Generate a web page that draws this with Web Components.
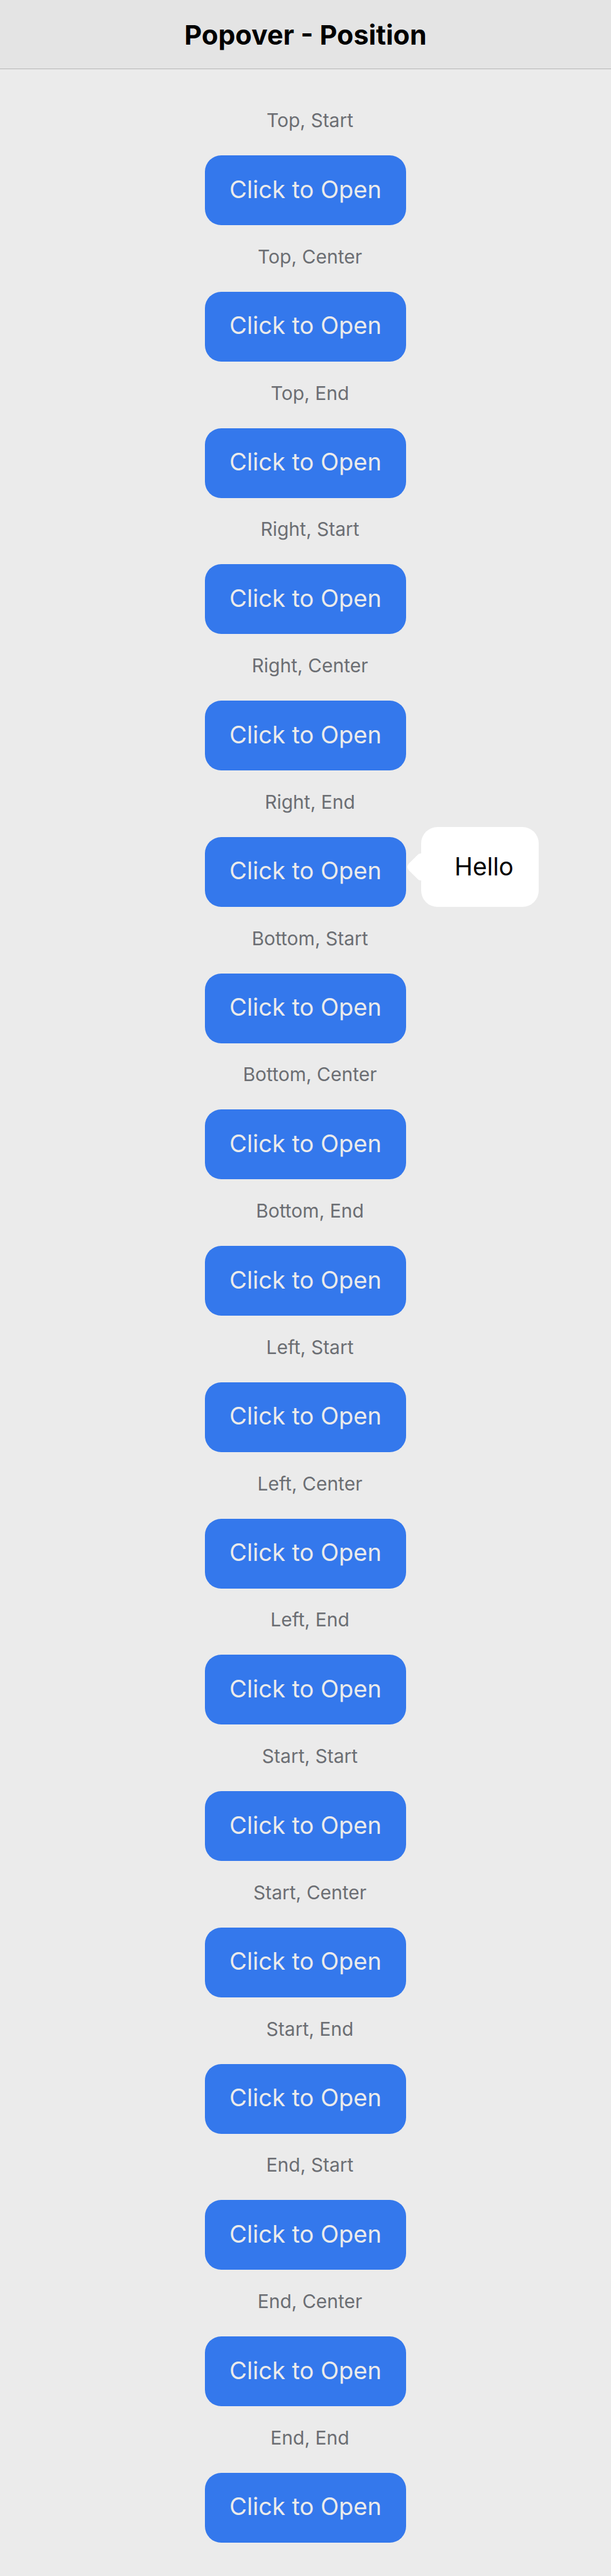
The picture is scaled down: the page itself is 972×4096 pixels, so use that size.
<!DOCTYPE html>
<html lang="en">
<head>
<meta charset="utf-8">
<meta name="viewport" content="width=device-width, initial-scale=1">
<title>Popover - Position</title>
<style>
  body { margin: 0; background: #ebebeb; font-family: Inter, "Liberation Sans", sans-serif; }
</style>
</head>
<body>
<popover-page>
  <span slot="title">Popover - Position</span>
  <position-demo label="Top, Start"></position-demo>
  <position-demo label="Top, Center"></position-demo>
  <position-demo label="Top, End"></position-demo>
  <position-demo label="Right, Start"></position-demo>
  <position-demo label="Right, Center"></position-demo>
  <position-demo label="Right, End"><hello-popover slot="popover">Hello</hello-popover></position-demo>
  <position-demo label="Bottom, Start"></position-demo>
  <position-demo label="Bottom, Center"></position-demo>
  <position-demo label="Bottom, End"></position-demo>
  <position-demo label="Left, Start"></position-demo>
  <position-demo label="Left, Center"></position-demo>
  <position-demo label="Left, End"></position-demo>
  <position-demo label="Start, Start"></position-demo>
  <position-demo label="Start, Center"></position-demo>
  <position-demo label="Start, End"></position-demo>
  <position-demo label="End, Start"></position-demo>
  <position-demo label="End, Center"></position-demo>
  <position-demo label="End, End"></position-demo>
</popover-page>
<script>
class PopoverPage extends HTMLElement {
  constructor() {
    super();
    this.attachShadow({ mode: 'open' }).innerHTML = `
      <style>
        :host { display: flex; flex-direction: column; min-height: 100vh; }
        header {
          display: flex; align-items: center; justify-content: center;
          box-sizing: border-box; min-height: 110px;
          background: #e4e4e4; border-bottom: 1px solid #b6b6b6;
        }
        h1 { margin: 0; font-size: 43px; line-height: 52px; font-weight: 700; color: #000; }
        main {
          flex: 1; display: flex; flex-direction: column; align-items: center;
          justify-content: space-between; padding: 63px 0 53px;
        }
      </style>
      <header><h1><slot name="title"></slot></h1></header>
      <main><slot></slot></main>`;
  }
}

class PositionDemo extends HTMLElement {
  constructor() {
    super();
    this.attachShadow({ mode: 'open' }).innerHTML = `
      <style>
        :host { display: flex; flex-direction: column; align-items: center; gap: 38px; }
        p { margin: 0; padding-left: 14px; font-size: 30px; line-height: 36px; color: #6b6e73; }
        .anchor { position: relative; }
        button {
          display: block; width: 320px; height: 111px; padding: 0 0 4px; border: 0;
          border-radius: 26px; background: #3478ec; color: #ebebeb;
          font: inherit; font-size: 38px; line-height: 48px;
        }
        ::slotted(*) { position: absolute; left: 100%; bottom: 0; margin-left: 24px; }
      </style>
      <p id="position"></p>
      <div class="anchor">
        <button type="button" aria-describedby="position">Click to Open</button>
        <slot name="popover"></slot>
      </div>`;
  }
  connectedCallback() {
    this.shadowRoot.querySelector('p').textContent = this.getAttribute('label');
  }
}

class HelloPopover extends HTMLElement {
  constructor() {
    super();
    this.attachShadow({ mode: 'open' }).innerHTML = `
      <style>
        :host {
          display: flex; align-items: center; box-sizing: border-box;
          width: 187px; height: 127px; padding-left: 53px;
          border-radius: 26px; background: #fff; color: #000;
          font-size: 39px; line-height: 48px;
        }
        svg { position: absolute; right: 100%; top: 42px; display: block; }
      </style>
      <svg width="22" height="43" viewBox="0 0 22 43" aria-hidden="true">
        <path fill="#fff" d="M22 0C19.5 0 18 .8 16.5 2.2L2.5 16Q-2.3 21.5 2.5 27L16.5 40.8C18 42.2 19.5 43 22 43Z"/>
      </svg>
      <slot></slot>`;
  }
}

customElements.define('popover-page', PopoverPage);
customElements.define('position-demo', PositionDemo);
customElements.define('hello-popover', HelloPopover);
</script>
</body>
</html>
